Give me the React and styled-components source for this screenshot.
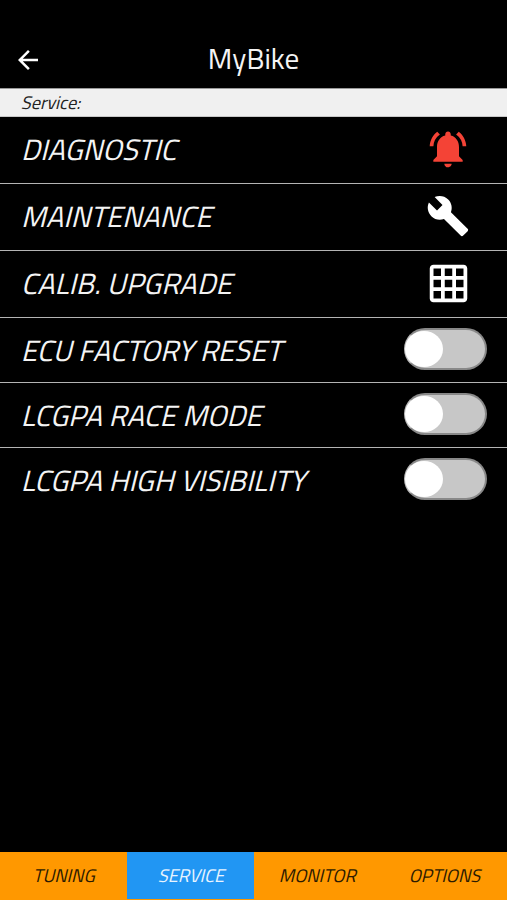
import React from "react"
import styled, { createGlobalStyle } from "styled-components"
import { MdArrowBack, MdBuild, MdGridOn, MdNotificationsActive } from "react-icons/md"

const GlobalStyle = createGlobalStyle`
	* {
		box-sizing: border-box;
	}
	body {
		margin: 0;
		background-color: #000;
	}
`
const Screen = styled.div`
	display: flex;
	flex-direction: column;
	width: 507px;
	height: 900px;
	background-color: #000;
	color: #f4f4f4;
	font-family: "Titillium Web", "Roboto", sans-serif;
	overflow: hidden;
`
const Header = styled.header`
	display: grid;
	grid-template-columns: 56px 1fr 56px;
	align-items: center;
	height: 88px;
	padding-top: 31px;
`
const BackButton = styled.button`
	display: flex;
	justify-content: center;
	padding: 0;
	border: 0;
	background: none;
	color: #fff;
	font-size: 30px;
`
const Title = styled.h1`
	margin: 0;
	padding-bottom: 4px;
	text-align: center;
	font-size: 29.2px;
	font-weight: 400;
	line-height: 40px;
	white-space: nowrap;
`
const SectionLabel = styled.div`
	height: 29px;
	padding-left: 21px;
	border-top: 1px solid #999;
	border-bottom: 1px solid #c8c8c8;
	background-color: #f0f0f0;
	color: #222;
	font-size: 18.3px;
	line-height: 27px;
`
const Slanted = styled.span`
	display: inline-block;
	white-space: nowrap;
	transform: skewX(-14deg);
	transform-origin: 50% 72%;
`
const List = styled.main`
	flex: 1;
`
const Row = styled.div`
	display: flex;
	align-items: center;
	justify-content: space-between;
	height: ${(props) => props.$height}px;
	padding: 0 20px 0 21px;
	border-bottom: 1px solid ${(props) => (props.$last ? "transparent" : "#b4b4b4")};
`
const Label = styled(Slanted)`
	font-size: 29.4px;
	font-weight: 400;
	line-height: 44px;
	padding-bottom: ${(props) => props.$lift || 0}px;
`
const IconBox = styled.div`
	display: flex;
	justify-content: center;
	width: 78px;
	padding-bottom: ${(props) => props.$lift || 1}px;
	color: ${(props) => props.$color || "#fff"};
	font-size: ${(props) => props.$size || 45}px;
`
const Track = styled.div`
	display: flex;
	align-items: center;
	width: 83px;
	height: 42px;
	margin-bottom: 2px;
	border: 2px solid #888;
	border-left-color: #bbb;
	border-radius: 21px;
	background-color: #c7c7c7;
`
const Thumb = styled.div`
	width: 38px;
	height: 36px;
	margin-left: -1px;
	border-radius: 50%;
	background-color: #fff;
`
const TabBar = styled.nav`
	display: grid;
	grid-template-columns: repeat(4, 1fr);
	height: 48px;
	padding-bottom: 1px;
	background-color: #ff9800;
`
const Tab = styled.div`
	display: flex;
	align-items: center;
	justify-content: center;
	padding: 0 0 2px 2px;
	background-color: ${(props) => (props.$active ? "#2196f3" : "#ff9800")};
	color: ${(props) => (props.$active ? "#e8f4ff" : "#2b1a00")};
	font-size: 18.3px;
`

const links = [
	{ label: "DIAGNOSTIC", icon: <MdNotificationsActive />, color: "#f44336", size: 44, lift: 2 },
	{ label: "MAINTENANCE", icon: <MdBuild />, size: 44, lift: 2 },
	{ label: "CALIB. UPGRADE", icon: <MdGridOn />, size: 45, lift: 1 },
]
const switches = ["ECU FACTORY RESET", "LCGPA RACE MODE", "LCGPA HIGH VISIBILITY"]
const tabs = ["TUNING", "SERVICE", "MONITOR", "OPTIONS"]

const App = () => {
	return (
		<Screen>
			<GlobalStyle />
			<Header>
				<BackButton aria-label="Back">
					<MdArrowBack />
				</BackButton>
				<Title>MyBike</Title>
			</Header>
			<SectionLabel>
				<Slanted>Service:</Slanted>
			</SectionLabel>
			<List>
				{links.map((item) => (
					<Row key={item.label} $height={67}>
						<Label $lift={2}>{item.label}</Label>
						<IconBox $color={item.color} $size={item.size} $lift={item.lift}>
							{item.icon}
						</IconBox>
					</Row>
				))}
				{switches.map((label, index) => (
					<Row key={label} $height={65} $last={index === switches.length - 1}>
						<Label>{label}</Label>
						<Track>
							<Thumb />
						</Track>
					</Row>
				))}
			</List>
			<TabBar>
				{tabs.map((tab) => (
					<Tab key={tab} $active={tab === "SERVICE"}>
						<Slanted>{tab}</Slanted>
					</Tab>
				))}
			</TabBar>
		</Screen>
	)
}

export default App
